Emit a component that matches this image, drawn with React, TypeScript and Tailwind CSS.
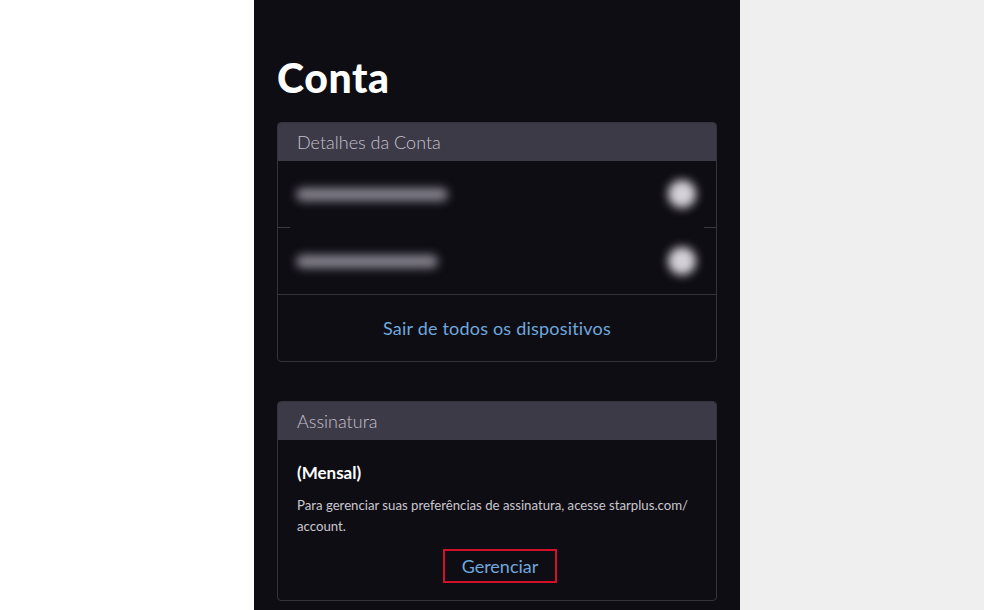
import React from "react";

const font = { fontFamily: "Lato, 'Noto Sans', sans-serif" };

function BlurRow({ w, label }: { w: string; label: string }) {
  return (
    <div className="flex h-[66px] items-center justify-between pl-[18px] pr-[20px]">
      <div className="blur-[5px]">
        <span className={`block h-[13px] ${w} rounded-full bg-[#86838e]`} title={label} />
      </div>
      <div className="h-[28px] w-[28px] rounded-full bg-[#d4d2d8] blur-[5px]" />
    </div>
  );
}

export default function App() {
  return (
    <div className="flex h-[610px] w-full" style={font}>
      <div className="w-[254px] bg-white" />
      <div className="w-[486px] bg-[#0f0d14] px-[23px] pt-[54px]">
        <h1 className="text-[41px] font-black leading-[48px] tracking-[0.6px] text-white">Conta</h1>

        {/* Detalhes da conta */}
        <div className="mt-[20px] overflow-hidden rounded-[4px] border border-[#34323d]">
          <div className="flex h-[38px] items-center bg-[#3d3a48] px-[19px] text-[18px] font-light text-[#c4c1cb]">
            Detalhes da Conta
          </div>
          <BlurRow w="w-[152px]" label="email" />
          <div className="flex h-px">
            <div className="w-[12px] bg-[#3a3843]" />
            <div className="flex-1" />
            <div className="w-[12px] bg-[#3a3843]" />
          </div>
          <BlurRow w="w-[142px]" label="senha" />
          <div className="h-px bg-[#34323d]" />
          <div className="flex h-[66px] items-center justify-center text-[18px] tracking-[0.2px] text-[#6ea8de]">
            Sair de todos os dispositivos
          </div>
        </div>

        {/* Assinatura */}
        <div className="mt-[39px] overflow-hidden rounded-[4px] border border-[#34323d]">
          <div className="flex h-[38px] items-center bg-[#3d3a48] px-[19px] text-[18px] font-light text-[#c4c1cb]">
            Assinatura
          </div>
          <div className="px-[19px] pt-[21px] pb-[17px]">
            <div className="text-[17px] font-bold leading-[24px] text-white">(Mensal)</div>
            <p className="mt-[10px] text-[13.2px] leading-[21px] text-[#c9c7cf]">
              Para gerenciar suas preferências de assinatura, acesse starplus.com/ account.
            </p>
            <div className="mt-[12px] flex justify-center pl-[6px]">
              <div className="flex h-[34px] w-[114px] items-center justify-center border-2 border-[#d3102a] text-[18px] text-[#6ea8de]">
                Gerenciar
              </div>
            </div>
          </div>
        </div>
      </div>
      <div className="flex-1 bg-[#efefef]" />
    </div>
  );
}
